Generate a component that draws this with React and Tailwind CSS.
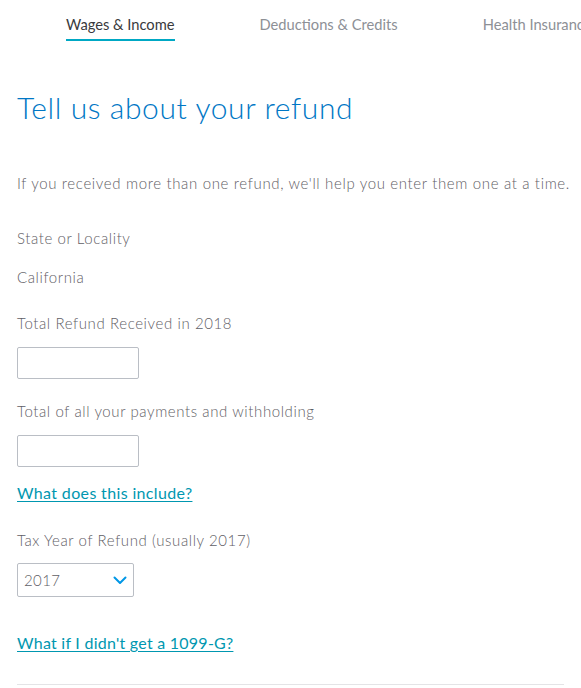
import React from 'react'

const tabs = [
  { label: 'Wages & Income', active: true },
  { label: 'Deductions & Credits' },
  { label: 'Health Insurance' },
]

const Field = ({ label, children }) => (
  <div className="flex flex-col">
    <label className="text-[15px] leading-5 tracking-[0.6px] font-light text-[#5f6066]">{label}</label>
    {children}
  </div>
)

export default function App() {
  return (
    <div className="w-[581px] h-[688px] overflow-hidden bg-white font-['Lato','Noto_Sans',sans-serif]">
      {/* top tabs */}
      <nav className="flex gap-[85px] pl-[66px] pt-[14px] whitespace-nowrap">
        {tabs.map((t) => (
          <div
            key={t.label}
            className={
              t.active
                ? 'pb-[5px] border-b-2 border-[#00a8c4] text-[14.7px] leading-5 text-[#393a3d]'
                : 'pb-[5px] text-[14.7px] leading-5 text-[#8d9096]'
            }
          >
            {t.label}
          </div>
        ))}
      </nav>

      <div className="px-[17px]">
        <h1 className="mt-[48px] text-[30px] leading-9 tracking-[0.6px] font-light text-[#0077c5]">
          Tell us about your refund
        </h1>

        <p className="mt-[48px] text-[15px] leading-5 tracking-[0.65px] font-light text-[#5f6066] whitespace-nowrap">
          If you received more than one refund, we'll help you enter them one at a time.
        </p>

        <div className="mt-[35px] flex flex-col">
          <Field label="State or Locality">
            <span className="mt-[19px] text-[15px] leading-5 tracking-[0.6px] font-light text-[#5f6066]">California</span>
          </Field>

          <div className="mt-[26px]">
            <Field label="Total Refund Received in 2018">
              <input
                type="text"
                className="mt-[14px] w-[122px] h-[32px] border border-[#babec5] rounded-[2px] outline-none"
              />
            </Field>
          </div>

          <div className="mt-[22px]">
            <Field label="Total of all your payments and withholding">
              <input
                type="text"
                className="mt-[14px] w-[122px] h-[32px] border border-[#babec5] rounded-[2px] outline-none"
              />
            </Field>
          </div>

          <a href="#" className="mt-[16px] self-start text-[16px] leading-5 tracking-[0.35px] text-[#0097b0] underline underline-offset-2">
            What does this include?
          </a>

          <div className="mt-[27px]">
            <Field label="Tax Year of Refund (usually 2017)">
              <div className="mt-[13px] w-[117px] h-[34px] border border-[#babec5] rounded-[2px] flex items-center justify-between pl-[6px] pr-[6px]">
                <span className="text-[15px] tracking-[0.4px] font-light text-[#5f6066]">2017</span>
                <svg width="14" height="9" viewBox="0 0 14 9" fill="none">
                  <path d="M1.5 1.5 L7 7 L12.5 1.5" stroke="#0097e6" strokeWidth="2" strokeLinecap="round" strokeLinejoin="round" />
                </svg>
              </div>
            </Field>
          </div>

          <a href="#" className="mt-[36px] self-start text-[16px] leading-5 tracking-[0.25px] text-[#0097b0] underline underline-offset-2">
            What if I didn't get a 1099-G?
          </a>

          <hr className="mt-[31px] border-t border-[#e4e4e6]" />
        </div>
      </div>
    </div>
  )
}
